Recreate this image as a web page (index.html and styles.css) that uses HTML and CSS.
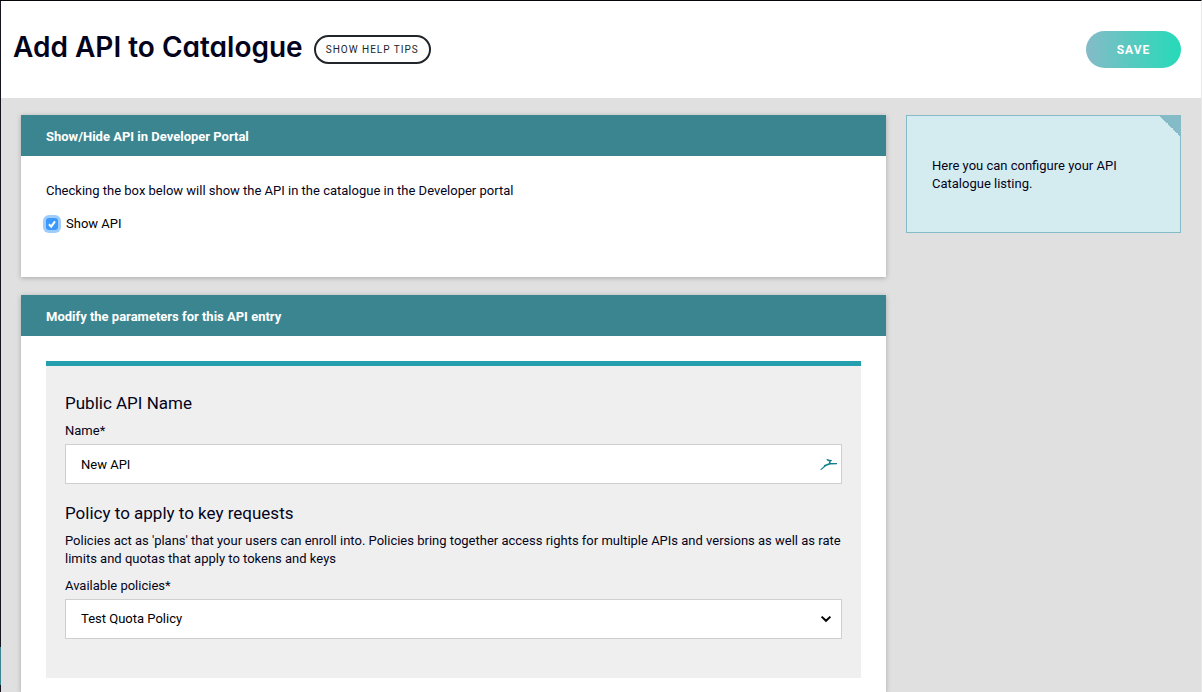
FILE: index.html
```html
<!DOCTYPE html>
<html lang="en">
<head>
<meta charset="utf-8">
<meta name="viewport" content="width=device-width, initial-scale=1">
<title>Add API to Catalogue</title>
<link rel="stylesheet" href="styles.css">
</head>
<body>
<div class="shell">
  <div class="rail"><div class="rail-active"></div></div>
  <div class="page">
    <header class="page-header">
      <h1 class="page-title">Add API to Catalogue</h1>
      <button class="help-button" type="button">SHOW HELP TIPS</button>
      <button class="save-button" type="submit" form="api-form">SAVE</button>
    </header>
    <div class="content">
      <form class="cards" id="api-form">
        <section class="card">
          <h2 class="card-header">Show/Hide API in Developer Portal</h2>
          <div class="card-body visibility">
            <p class="text">Checking the box below will show the API in the catalogue in the Developer portal</p>
            <label class="check-label"><input class="check" type="checkbox" checked><svg class="tick" viewBox="0 0 12 12" aria-hidden="true"><path d="M3 6.3 5.2 8.7 9 3.3"/></svg>Show API</label>
          </div>
        </section>
        <section class="card card-fill">
          <h2 class="card-header">Modify the parameters for this API entry</h2>
          <div class="card-body">
            <div class="panel">
              <h3 class="panel-title">Public API Name</h3>
              <label class="label" for="name">Name*</label>
              <div class="field">
                <input class="control" id="name" type="text" value="New API">
                <svg class="bird" viewBox="0 0 18 14" aria-hidden="true"><path d="M0.2 12.6 3.6 9.4 4.2 8 8.8 6.2 9.2 4.4 7 3.4 6.4 1.8 9.4 2.8 12 3 11.6 4 10.6 4.6 10.6 6 17 6V7.2L10.4 7.6 6.2 9 1.2 13Z"/></svg>
              </div>
              <h3 class="panel-title">Policy to apply to key requests</h3>
              <p class="text">Policies act as 'plans' that your users can enroll into. Policies bring together access rights for multiple APIs and versions as well as rate limits and quotas that apply to tokens and keys</p>
              <label class="label" for="policy">Available policies*</label>
              <div class="field">
                <select class="control" id="policy"><option>Test Quota Policy</option></select>
                <svg class="chevron" viewBox="0 0 10 6" aria-hidden="true"><path d="M.6.6 5 4.8 9.4.6"/></svg>
              </div>
            </div>
          </div>
        </section>
      </form>
      <aside class="note">
        <p class="text">Here you can configure your API Catalogue listing.</p>
      </aside>
    </div>
  </div>
</div>
</body>
</html>
```
FILE: styles.css
```css
* { box-sizing: border-box; }

body {
  margin: 0;
  color: #03031c;
  font: 13px/18px Roboto, "Liberation Sans", sans-serif;
}

h1, h2, h3, p { margin: 0; }

button, input, select { font: inherit; color: inherit; }

.shell {
  display: flex;
  min-height: 100vh;
  border-top: 1px solid #05050a;
  border-right: 1px solid #e9e9e9;
}

.rail {
  display: flex;
  flex-direction: column;
  justify-content: flex-end;
  width: 1px;
  padding-bottom: 7px;
  background: #14151f;
}

.rail-active { height: 38px; background: #3b8590; }

.page {
  display: flex;
  flex: 1;
  flex-direction: column;
  min-width: 0;
  background: #e0e0e0;
}

.page-header {
  display: flex;
  align-items: center;
  gap: 11px;
  height: 97px;
  padding: 0 20px 0 12px;
  background: #fff;
}

.page-title {
  padding-bottom: 6px;
  font: 600 28px/36px Inter, Roboto, sans-serif;
  font-feature-settings: "cv11";
}

.help-button {
  height: 29px;
  padding: 0 10px;
  border: 2px solid #212529;
  border-radius: 15px;
  background: #fff;
  color: #212529;
  font-size: 10px;
  font-weight: 400;
  letter-spacing: 1px;
}

.save-button {
  width: 95px;
  height: 37px;
  margin-left: auto;
  border: 0;
  border-radius: 19px;
  background: linear-gradient(90deg, #85bbc7, #25dab8);
  color: #fff;
  font-size: 12px;
  font-weight: 700;
  letter-spacing: 1px;
}

.content {
  display: grid;
  flex: 1;
  grid-template-columns: minmax(0, 865fr) minmax(0, 275fr);
  gap: 20px;
  padding: 17px 20px 0;
}

.cards {
  display: flex;
  flex-direction: column;
  gap: 18px;
}

.card {
  background: #fff;
  box-shadow: 0 1px 5px rgba(0, 0, 0, 0.25);
}

.card-fill { flex: 1; }

.card-header {
  padding: 13px 25px 10px;
  background: #3b8590;
  color: #fff;
  font-size: 13px;
  font-weight: 700;
  line-height: 18px;
}

.card-body { padding: 25px 25px 14px; }

.visibility { padding-top: 26px; padding-bottom: 44px; }

.check-label {
  position: relative;
  display: flex;
  align-items: center;
  gap: 8px;
  margin-top: 15px;
  color: #000;
}

.check {
  width: 12px;
  height: 12px;
  margin: 0;
  border-radius: 3px;
  background: #3b99fc;
  box-shadow: 0 0 0 3px #9dccfd;
  appearance: none;
}

.tick {
  position: absolute;
  left: 0;
  width: 12px;
  height: 12px;
  fill: none;
  stroke: transparent;
  stroke-width: 2;
}

.check:not(:checked) { background: #fff; }

.check:checked + .tick { stroke: #fff; }

.panel {
  padding: 26px 19px 39px;
  border-top: 5px solid #239fae;
  background: #efefef;
}

.panel-title {
  margin-bottom: 8px;
  font-size: 17px;
  font-weight: 400;
  line-height: 22px;
}

.label { display: block; margin-bottom: 4px; }

.field { position: relative; }

.field + .panel-title { margin-top: 18px; }

.text + .label { margin-top: 9px; }

.control {
  display: block;
  width: 100%;
  height: 40px;
  padding: 0 40px 0 15px;
  border: 1px solid #cfcfcf;
  border-radius: 0;
  background: #fff;
  color: #000;
  appearance: none;
}

.bird {
  position: absolute;
  top: 13px;
  right: 4px;
  width: 18px;
  height: 14px;
  fill: #16808f;
}

.chevron {
  position: absolute;
  top: 17px;
  right: 11px;
  width: 10px;
  height: 6px;
  overflow: visible;
  fill: none;
  stroke: #000;
  stroke-width: 2;
  pointer-events: none;
}

.note {
  align-self: start;
  padding: 41px 25px 39px;
  border: 1px solid #85bbc7;
  background: linear-gradient(45deg, transparent 50%, #85bbc7 50%) top right / 20px 20px no-repeat #d4ecf0;
}
```
